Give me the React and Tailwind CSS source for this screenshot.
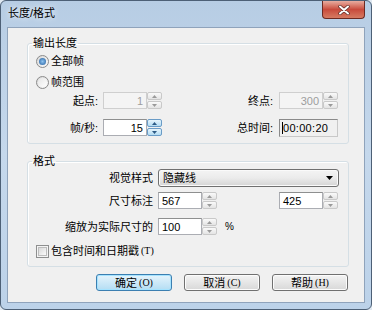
import React from "react";

const FONT = { fontFamily: '"Liberation Sans", "Noto Sans CJK SC", sans-serif' };
const SERIF = { fontFamily: '"Liberation Serif", serif' };

function Tri({ up, color }) {
  return (
    <svg width="5" height="3" viewBox="0 0 5 3">
      <path d={up ? "M0 3L2.5 0L5 3Z" : "M0 0L5 0L2.5 3Z"} fill={color} />
    </svg>
  );
}

function Spinner({ active }) {
  const half = active
    ? "flex-1 flex items-center justify-center border border-[#6a9cc7] rounded-[2px] bg-linear-to-b from-[#e6f4fc] to-[#b3dcf3]"
    : "flex-1 flex items-center justify-center border border-[#c9c9c9] rounded-[2px] bg-linear-to-b from-[#fafafa] to-[#e4e4e4]";
  const col = active ? "#2c5a85" : "#9a9a9a";
  return (
    <div className="flex flex-col w-[15px] h-[17px] gap-[1px]">
      <div className={half}>
        <Tri up color={col} />
      </div>
      <div className={half}>
        <Tri color={col} />
      </div>
    </div>
  );
}

function NumBox({ value, right, disabled, active }) {
  const box = disabled
    ? "w-[44px] h-[17px] border border-[#cfcfcf] bg-[#f4f4f4] text-[#9d9d9d] flex items-center px-[3px]"
    : "w-[44px] h-[17px] border border-[#abadb3] border-t-[#8e8f8f] bg-white text-black flex items-center px-[3px]";
  return (
    <div className="flex items-center">
      <div className={box + (right ? " justify-end" : "")}>{value}</div>
      <Spinner active={active} />
    </div>
  );
}

function Radio({ checked }) {
  return (
    <div className="w-[13px] h-[13px] rounded-full border border-[#8a8a8a] bg-linear-to-br from-[#d8d8d8] to-[#fbfbfb] flex items-center justify-center">
      {checked ? (
        <div className="w-[7px] h-[7px] rounded-full bg-radial from-[#8ec3ef] to-[#1f5d9e]" />
      ) : (
        <div className="w-[9px] h-[9px] rounded-full bg-linear-to-br from-[#e6e6e6] to-[#ffffff]" />
      )}
    </div>
  );
}

function Button({ label, acc, primary }) {
  const cls = primary
    ? "w-[76px] h-[17px] rounded-[3px] border border-[#3c7fb1] bg-linear-to-b from-[#e5f4fc] to-[#b4ddf3] shadow-[inset_0_0_0_1px_#a5e3ff] flex items-center justify-center"
    : "w-[76px] h-[17px] rounded-[3px] border border-[#707070] bg-linear-to-b from-[#f4f4f4] to-[#d8d8d8] shadow-[inset_0_0_0_1px_#fcfcfc] flex items-center justify-center";
  return (
    <div className={cls}>
      <span>{label}</span>
      <span className="ml-[2px] text-[10px]" style={SERIF}>
        ({acc})
      </span>
    </div>
  );
}

export default function App() {
  return (
    <div className="w-[372px] h-[310px] bg-[#dfe8f1] text-[11px] leading-[14px] text-black" style={FONT}>
      <div className="relative w-[372px] h-[310px] rounded-[6px] border border-[#4d6076] bg-linear-to-b from-[#b7cde4] via-[#c5d8ec] to-[#bcd2e9] px-[6px] flex flex-col">
        <div className="h-[26px] flex items-center pl-[1px] pb-[2px]">
          <span className="text-[11px] [text-shadow:0_0_6px_#ffffff]">长度/格式</span>
        </div>
        <div className="absolute top-0 right-[6px] w-[43px] h-[18px] rounded-b-[4px] border border-[#6d2a22] border-t-0 bg-linear-to-b from-[#e7aca0] via-[#c84a3c] to-[#d67a62] flex items-center justify-center">
          <svg width="12" height="10" viewBox="0 0 12 10">
            <path d="M2 1.5L10 8.5M10 1.5L2 8.5" stroke="#5a2a24" strokeWidth="3.4" strokeLinecap="round" />
            <path d="M2 1.5L10 8.5M10 1.5L2 8.5" stroke="#ffffff" strokeWidth="2" strokeLinecap="round" />
          </svg>
        </div>

        <div className="w-[358px] h-[276px] border border-[#8fa3bb] bg-[#f0f0f0] flex flex-col">
          {/* Group 1 */}
          <fieldset className="ml-[19px] mt-[8px] w-[322px] border border-[#d5dfe5] rounded-[3px] shadow-[inset_1px_1px_0_#ffffff]">
            <legend className="ml-[4px] px-[1px] leading-[14px]">输出长度</legend>
            <div className="flex flex-col pb-[7px]">
              <div className="mt-[4px] h-[14px] pl-[8px] flex items-center">
                <Radio checked />
                <span className="ml-[2px]">全部帧</span>
              </div>
              <div className="mt-[7px] h-[14px] pl-[8px] flex items-center">
                <Radio />
                <span className="ml-[2px]">帧范围</span>
              </div>
              <div className="mt-[3px] h-[17px] flex items-center">
                <div className="w-[71px] text-right pr-[1px]">起点:</div>
                <div className="ml-[4px]">
                  <NumBox value="1" right disabled />
                </div>
                <div className="w-[112px] text-right pr-[1px]">终点:</div>
                <div className="ml-[5px]">
                  <NumBox value="300" right disabled />
                </div>
              </div>
              <div className="mt-[10px] h-[17px] flex items-center">
                <div className="w-[71px] text-right pr-[1px]">帧/秒:</div>
                <div className="ml-[4px]">
                  <NumBox value="15" right active />
                </div>
                <div className="w-[112px] text-right pr-[1px]">总时间:</div>
                <div className="ml-[5px] w-[59px] h-[18px] border border-[#8a8a8a] border-r-[#c8c8c8] border-b-[#c8c8c8] bg-[#f0f0f0] flex items-center pl-[2px]">
                  <div className="w-[1px] h-[12px] bg-black" />
                  <span className="tracking-[0.3px]">00:00:20</span>
                </div>
              </div>
            </div>
          </fieldset>

          {/* Group 2 */}
          <fieldset className="ml-[19px] mt-[10px] w-[322px] border border-[#d5dfe5] rounded-[3px] shadow-[inset_1px_1px_0_#ffffff]">
            <legend className="ml-[4px] px-[1px] leading-[14px]">格式</legend>
            <div className="flex flex-col pb-[8px]">
              <div className="mt-[1px] h-[18px] flex items-center">
                <div className="w-[126px] text-right pr-[1px]">视觉样式</div>
                <div className="ml-[4px] w-[181px] h-[18px] rounded-[3px] border border-[#707070] bg-linear-to-b from-[#f4f4f4] via-[#ebebeb] to-[#d4d4d4] shadow-[inset_0_0_0_1px_#fafafa] flex items-center justify-between pl-[4px] pr-[5px]">
                  <span>隐藏线</span>
                  <svg width="7" height="4" viewBox="0 0 7 4">
                    <path d="M0 0L7 0L3.5 4Z" fill="#000" />
                  </svg>
                </div>
              </div>
              <div className="mt-[5px] h-[17px] flex items-center">
                <div className="w-[126px] text-right pr-[1px]">尺寸标注</div>
                <div className="ml-[4px]">
                  <NumBox value="567" />
                </div>
                <div className="ml-[62px]">
                  <NumBox value="425" />
                </div>
              </div>
              <div className="mt-[9px] h-[17px] flex items-center">
                <div className="w-[126px] text-right pr-[1px] whitespace-nowrap">缩放为实际尺寸的</div>
                <div className="ml-[4px]">
                  <NumBox value="100" />
                </div>
                <span className="ml-[8px] text-[10px]">%</span>
              </div>
              <div className="mt-[9px] h-[14px] pl-[8px] flex items-center">
                <div className="w-[13px] h-[13px] border border-[#8e8f8f] bg-[#f4f4f4] flex items-center justify-center">
                  <div className="w-[9px] h-[9px] bg-linear-to-br from-[#d9d9d9] to-[#fbfbfb] border border-[#bdbdbd]" />
                </div>
                <span className="ml-[2px]">包含时间和日期戳</span>
                <span className="ml-[2px] text-[10px]" style={SERIF}>
                  (T)
                </span>
              </div>
            </div>
          </fieldset>

          <div className="mt-[7px] flex justify-end gap-[12px] pr-[16px]">
            <Button label="确定" acc="O" primary />
            <Button label="取消" acc="C" />
            <Button label="帮助" acc="H" />
          </div>
        </div>
      </div>
    </div>
  );
}
